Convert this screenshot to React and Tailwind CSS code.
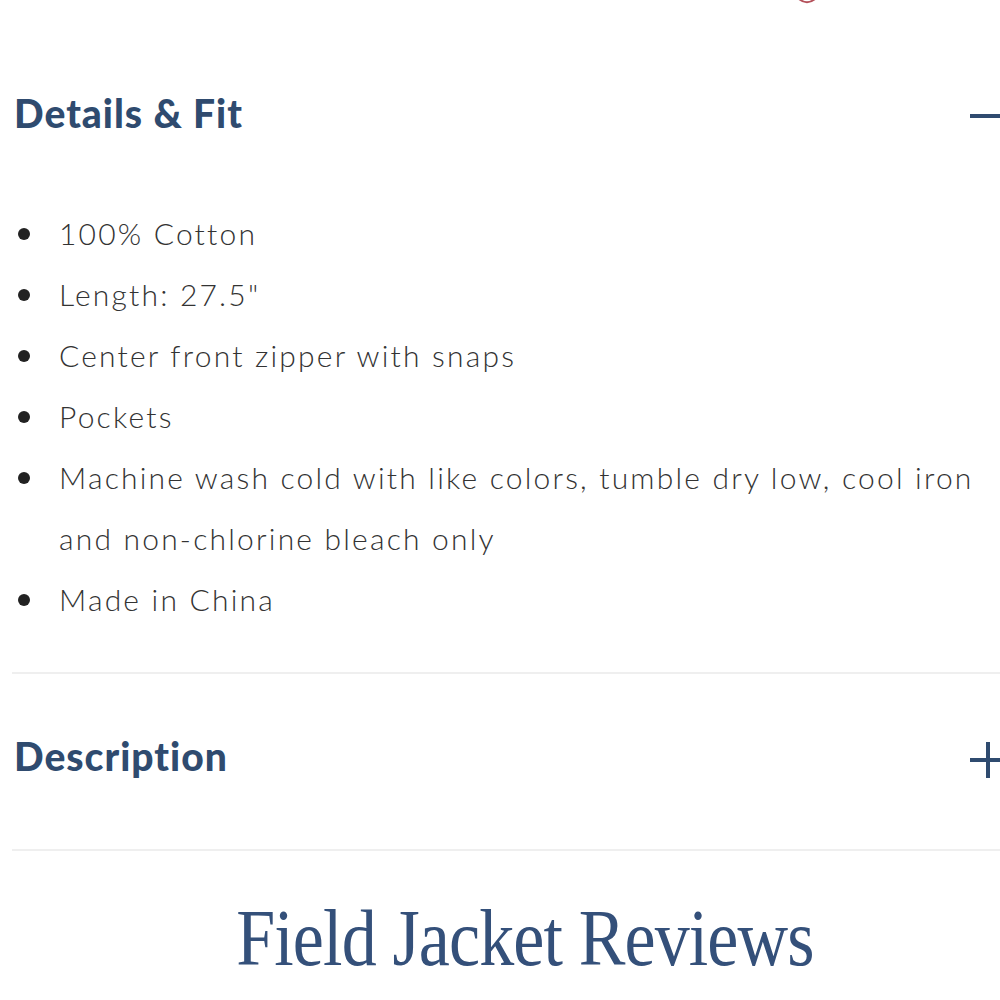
import React from "react";

const items = [
  "100% Cotton",
  'Length: 27.5"',
  "Center front zipper with snaps",
  "Pockets",
  "Machine wash cold with like colors, tumble dry low, cool iron and non-chlorine bleach only",
  "Made in China",
];

export default function App() {
  return (
    <div className="w-[1000px] h-[1000px] overflow-hidden bg-white">
      <div className="w-[1050px]">
        <div className="h-[6px] relative">
          <svg className="absolute left-[796px] top-0" width="22" height="6" viewBox="0 0 22 6">
            <path d="M3 -1 Q11 5.5 19 -1" fill="none" stroke="#b4505a" strokeWidth="2" />
          </svg>
        </div>
        <div className="pl-[14px] pt-[83px]">
          <div className="w-[992px] flex items-center justify-between h-[48px]">
            <h2 className="text-[39px] leading-[48px] font-black tracking-[1px] text-[#2f4b6f] font-['Lato',sans-serif]">
              Details &amp; Fit
            </h2>
            <div className="w-[36px] h-[4px] bg-[#2f4b6f] translate-y-[3px]" />
          </div>
        </div>
        <ul className="mt-[66px] pl-[18px] font-['Lato',sans-serif] font-light text-[30px] leading-[61px] tracking-[2.2px] text-[#333333]">
          {items.map((t) => (
            <li key={t} className="flex">
              <div className="h-[61px] w-[41px] shrink-0 flex items-center">
                <span className="w-[12px] h-[12px] rounded-full bg-[#222222]" />
              </div>
              <span className="w-[935px]">{t}</span>
            </li>
          ))}
        </ul>
        <div className="ml-[12px] mt-[42px] h-[2px] bg-[#efefef]" />
        <div className="pl-[14px] pt-[58px]">
          <div className="w-[992px] flex items-center justify-between h-[48px]">
            <h2 className="text-[39px] leading-[48px] font-black tracking-[1px] text-[#2f4b6f] font-['Lato',sans-serif]">
              Description
            </h2>
            <div className="relative w-[36px] h-[36px] translate-y-[4px]">
              <div className="absolute left-0 top-[16px] w-[36px] h-[4px] bg-[#2f4b6f]" />
              <div className="absolute left-[16px] top-0 w-[4px] h-[36px] bg-[#2f4b6f]" />
            </div>
          </div>
        </div>
        <div className="ml-[12px] mt-[69px] h-[2px] bg-[#efefef]" />
        <div className="mt-[47px] flex justify-center">
          <h3 className="inline-block scale-x-[0.875] text-[80px] leading-[80px] text-[#34507a] font-['Liberation_Serif',serif] tracking-[-1px]">
            Field Jacket Reviews
          </h3>
        </div>
      </div>
    </div>
  );
}
